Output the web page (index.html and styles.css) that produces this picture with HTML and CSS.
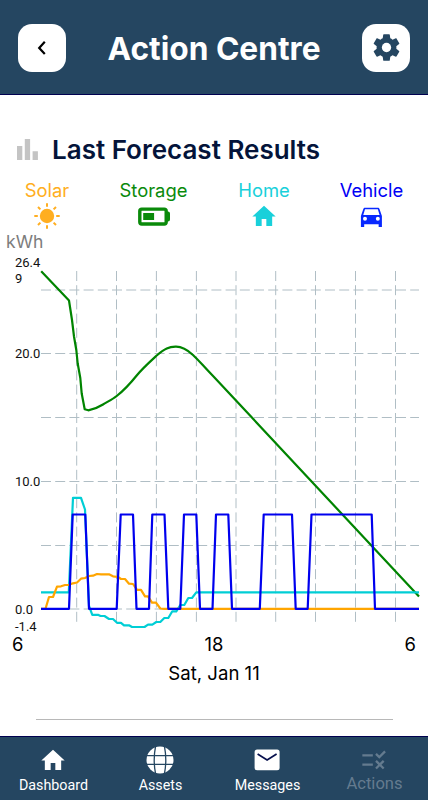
FILE: index.html
```html
<!DOCTYPE html>
<html lang="en">
<head>
<meta charset="utf-8">
<title>Action Centre</title>
<link rel="stylesheet" href="styles.css">
</head>
<body>
<header class="topbar">
  <button class="square" aria-label="Back"><svg width="24" height="24" viewBox="0 0 24 24"><path d="M14.800 5.800 9.200 11.900l5.600 6.100" fill="none" stroke="#000" stroke-width="2.200"/></svg></button>
  <h1>Action Centre</h1>
  <button class="square" aria-label="Settings"><svg width="33" height="33" viewBox="0 0 24 24"><path fill="#254661" d="M19.140 12.940c.04-.3.06-.61.06-.94 0-.32-.02-.64-.07-.94l2.030-1.580c.18-.14.23-.41.12-.61l-1.920-3.320c-.12-.22-.37-.29-.59-.22l-2.390.96c-.5-.38-1.030-.7-1.620-.94l-.36-2.540c-.04-.24-.24-.41-.48-.41h-3.840c-.24 0-.43.17-.47.41l-.36 2.540c-.59.24-1.130.57-1.620.94l-2.390-.96c-.22-.08-.47 0-.59.22L2.740 8.870c-.12.21-.08.47.12.61l2.030 1.580c-.05.3-.09.63-.09.94s.02.64.07.94l-2.030 1.580c-.18.14-.23.41-.12.61l1.920 3.320c.12.22.37.29.59.22l2.390-.96c.5.38 1.030.7 1.620.94l.36 2.540c.05.24.24.41.48.41h3.840c.24 0 .44-.17.47-.41l.36-2.540c.59-.24 1.130-.56 1.620-.94l2.390.96c.22.08.47 0 .59-.22l1.920-3.320c.12-.22.07-.47-.12-.61l-2.010-1.580z"/><circle cx="12" cy="12" r="3.400" fill="#fff"/></svg></button>
</header>
<main>
  <div class="heading">
    <svg width="21" height="22" viewBox="0 0 21 22"><path d="M0 7h5.300v14H0zM7.800 0h5.300v21H7.800zM15.600 12.300h5.300V21h-5.300z" fill="#c4c4c4"/></svg>
    <h2>Last Forecast Results</h2>
  </div>
  <div class="legend">
    <div class="item solar"><span>Solar</span>
      <svg width="28" height="28" viewBox="0 0 28 28"><circle cx="14" cy="14" r="7.200" fill="#ffae21"/><path d="M14 1.300v3.500M14 23.200v3.500M1.300 14h3.500M23.200 14h3.500M5 5l2.400 2.400M20.600 20.600 23 23M5 23l2.400-2.400M20.600 7.400 23 5" stroke="#ffae21" stroke-width="2"/></svg></div>
    <div class="item storage"><span>Storage</span>
      <svg width="34" height="28" viewBox="0 0 34 28"><rect x="2.800" y="7.100" width="26.400" height="14.900" rx="2" fill="none" stroke="#0a8a0a" stroke-width="3.400"/><path d="M30 9.500h1q2 .2 2 2v6q0 2-2 2.100h-1zM6.200 10.900h10.900v7H6.200z" fill="#0a8a0a"/></svg></div>
    <div class="item home"><span>Home</span>
      <svg width="28" height="28" viewBox="0 0 24 24"><path d="M10 20.500v-6h4v6h5v-8h3L12 3.300 2 12.500h3v8z" fill="#19d0da"/></svg></div>
    <div class="item vehicle"><span>Vehicle</span>
      <svg width="28" height="28" viewBox="0.500 0 24 24"><path d="M18.920 6.010C18.720 5.420 18.160 5 17.500 5h-11c-.66 0-1.210.42-1.420 1.010L3 12v9.500h2.800V19h12.400v2.500H21V12zM6.500 16.100a1.700 1.700 0 1 1 0-3.400 1.700 1.700 0 0 1 0 3.400zm11 0a1.700 1.700 0 1 1 0-3.400 1.700 1.700 0 0 1 0 3.400zM5 11.200 6.500 6.300h11l1.500 4.900z" fill="#0828ff" fill-rule="evenodd"/></svg></div>
  </div>
  <div class="unit">kWh</div>
  <svg class="chart" width="428" height="384" viewBox="0 254 428 384">
    <g class="grid">
      <path d="M41 290H419M41 353.500H419M41 417.500H419M41 481.500H419M41 545.500H419M41 609H419"/>
      <path d="M76.700 271V623M116.500 271V623M156.400 271V623M196.400 271V623M236 271V623M275.700 271V623M315.500 271V623M355.500 271V623M395.500 271V623"/>
    </g>
    <g class="axis">
      <text x="15" y="267">26.4</text><text x="15" y="283">9</text>
      <text x="15" y="358">20.0</text><text x="15" y="486">10.0</text>
      <text x="15" y="613.500">0.0</text><text x="15" y="631">-1.4</text>
    </g>
    <path class="line" stroke="#008400" d="M41.200 271.300 69 300.500 72 320 74 336.500 76.300 350 77.700 363.500 80.300 378 81.700 393.500 84.700 409.200 88.300 410.300C93 409.500 99 407 103 404.500S113 399 116.700 396C125 389.500 131.500 382 136.700 375.500S148 363.500 156.700 355.500C165 348.500 169 347 175.500 346.700S187 349.500 193 355 204 367 214 377L419 596.500"/>
    <path class="line" stroke="#00ced5" d="M41 592.300H68.800L73 497.800H81L85 509.500 89 606 92.300 614.800H98L100.500 616H104.500L109 619H113L117 622.800H121L124 625.300H129L132 627H144.500L148 624.700H152.300L156.300 622H160.300L164.300 618H168.300L172.300 611.300H176.300L180.300 605H184.300L188.300 598H192L196.300 592.300H419"/>
    <path class="line" stroke="#ffa500" d="M41 608.800H45.500L49 597H53L57 586.700 61 586.300 65 585 69 584.800 73 583.300 77 582.500 81 578.700 85 578 89 576 93 575.700 97 574 101 574.300H109L113 576.300 118 577 121 579H125L129 583.700 133 584 137 589.800H141L145 596.300H148L152 602.700H156L160.300 608.500 164 608.800H419"/>
    <path class="line" stroke="#0000ee" d="M41 608.800H69L72.700 514.500H85.300L89 608.800H116.700L120.700 514.500H133L136.500 608.800H149L152.300 514.500H164.500L168.300 608.800H180.300L184 514.500H196.300L200 608.800H212.500L216 514.500H228.300L232 608.800H259.800L263.700 514.500H292L295.700 608.800H307.700L311.500 514.500H371.700L375 608.800H419"/>
  </svg>
  <div class="hours"><span>6</span><span>18</span><span>6</span></div>
  <div class="date">Sat, Jan 11</div>
  <hr>
</main>
<nav>
  <a class="tab"><svg width="28" height="28" viewBox="0 0 24 24"><path d="M10 20.500v-6h4v6h5v-8h3L12 3.300 2 12.500h3v8z" fill="#fff"/></svg><span>Dashboard</span></a>
  <a class="tab"><svg width="28" height="28" viewBox="0 0 28 28"><circle cx="14" cy="14" r="13.500" fill="#fff"/><path d="M0 9.700h28M0 18.300h28M9.600 0Q6.800 14 9.600 28M18.400 0q2.800 14 0 28" fill="none" stroke="#254661" stroke-width="1.300"/></svg><span>Assets</span></a>
  <a class="tab"><svg width="28" height="28" viewBox="0 0 28 28"><rect x="1.600" y="3.600" width="25" height="20.600" rx="2.500" fill="#fff"/><path d="m4.600 8 9.500 6 9.500-6" fill="none" stroke="#07104d" stroke-width="1.700"/></svg><span>Messages</span></a>
  <a class="tab actions"><svg width="28" height="28" viewBox="0 0 24 24"><path fill="#647b8f" d="M16.540 11 13 7.460l1.410-1.410 2.120 2.120 4.240-4.240 1.410 1.410zM11 7H2v2h9zm10 6.410L19.590 12 17 14.590 14.410 12 13 13.410 15.590 16 13 18.590 14.410 20 17 17.410 19.590 20 21 18.590 18.410 16zM11 15H2v2h9z"/></svg><span>Actions</span></a>
</nav>
</body>
</html>
```

FILE: styles.css
```css
* { box-sizing: border-box; }
body {
  margin: 0;
  height: 800px;
  display: flex;
  flex-direction: column;
  background: #fff;
  font-family: Inter, "Liberation Sans", sans-serif;
  overflow: hidden;
}
svg { display: block; flex: none; }
.topbar {
  height: 95px;
  padding: 1px 18px 0;
  background: #254661;
  border-bottom: 1px solid #00004f;
  display: flex;
  align-items: center;
  justify-content: space-between;
}
.square {
  width: 48px;
  height: 48px;
  padding: 0;
  border: 0;
  border-radius: 14px;
  background: #fff;
  display: flex;
  align-items: center;
  justify-content: center;
}
h1 { margin: 2px 0 0; font-size: 31.700px; line-height: 40px; font-weight: 700; color: #fff; white-space: nowrap; }
main { flex: 1; min-height: 0; }
.heading { display: flex; align-items: center; gap: 14px; padding: 38px 0 0 17px; height: 72px; }
h2 { margin: 0; font-size: 26px; line-height: 34px; font-weight: 600; color: #04143a; white-space: nowrap; }
.legend { display: grid; grid-template-columns: 94px 119px 102px 113px; margin-top: 11px; height: 55px; }
.item { display: flex; flex-direction: column; align-items: center; font-size: 18.400px; line-height: 24px; }
.solar { color: #ffae21; }
.storage { color: #0a8a0a; }
.home { color: #19d0da; }
.vehicle { color: #0000f5; }
.unit { height: 21px; padding-left: 6px; font-size: 17.600px; line-height: 18px; color: #7d7d7d; }
.chart { overflow: visible; }
.grid path { fill: none; stroke: #b0bec5; stroke-width: 1; stroke-dasharray: 10 4.200; }
.line { fill: none; stroke-width: 2.200; stroke-linejoin: round; }
.axis { font: 13px Roboto, sans-serif; fill: #111; }
.hours { display: flex; justify-content: space-between; padding: 0 12px; font-size: 18.400px; line-height: 24px; margin-top: -6px; height: 24px; }
.date { margin-top: 5px; text-align: center; font-size: 18.600px; line-height: 24px; }
hr { width: 357px; height: 1px; margin: 34px 0 0 36px; border: 0; background: #b8b8b8; }
nav {
  height: 64px;
  background: #254661;
  border-top: 1px solid #00004f;
  display: grid;
  grid-template-columns: repeat(4, 1fr);
  color: #fff;
  font-family: Roboto, sans-serif;
}
.tab { display: flex; flex-direction: column; align-items: center; padding-top: 9px; font-size: 14.300px; line-height: 22px; }
.tab svg { margin-right: 1px; }
.actions { font-size: 16.600px; line-height: 20px; color: #647b8f; }
```
